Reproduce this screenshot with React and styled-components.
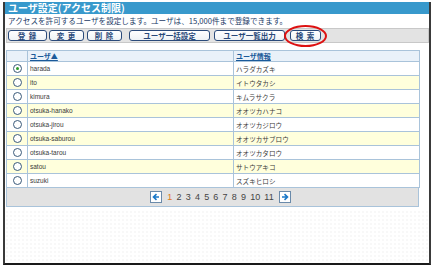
import React from "react";
import styled, { createGlobalStyle } from "styled-components";

const Global = createGlobalStyle`
  html, body { margin: 0; padding: 0; background: #fff; }
  body { font-family: "Noto Sans CJK JP", "Liberation Sans", sans-serif; }
`;

const Frame = styled.div`
  position: relative;
  margin: 2px 0 0 3px;
  width: 424px;
  height: 261px;
  border-left: 2px solid #3a3a3a;
  border-right: 2px solid #3a3a3a;
  border-bottom: 2px solid #1a1a1a;
  display: flex;
  flex-direction: column;
  background-color: #fff;
  background-image: radial-gradient(#efefef 0.6px, transparent 0.8px);
  background-size: 4px 4px;
`;

const TitleBar = styled.div`
  height: 12px;
  background: #3899cc;
  color: #fff;
  font-weight: bold;
  font-size: 10px;
  line-height: 12px;
  padding-left: 3px;
`;

const Desc = styled.div`
  background: #fff;
  color: #1a3a66;
  font-size: 7.6px;
  line-height: 14px;
  padding-left: 3px;
`;

const Body = styled.div`
  background: #fff;
  padding: 0 0 2px 1px;
  display: flex;
  flex-direction: column;
`;

const ButtonBar = styled.div`
  width: 420px;
  height: 13px;
  background: #e3e3e3;
  border: 1px solid #c8c8c8;
  display: flex;
  align-items: center;
  padding-left: 1px;
  box-sizing: content-box;
`;

const Btn = styled.button`
  width: ${(p) => p.$w}px;
  margin-left: ${(p) => p.$ml}px;
  height: 11px;
  padding: 0;
  border: 1px solid #2a4a7a;
  border-radius: 3px;
  background: linear-gradient(#ffffff, #eef2f6);
  color: #2a4a7a;
  font-family: "Noto Sans CJK JP", sans-serif;
  font-size: 7.5px;
  font-weight: bold;
  line-height: 9px;
  letter-spacing: ${(p) => p.$ls || 0}px;
  box-sizing: border-box;
  white-space: nowrap;
`;

const Ellipse = styled.div`
  position: absolute;
  left: 279px;
  top: 23px;
  width: 43px;
  height: 22px;
  border: 2px solid #dd1111;
  border-radius: 50%;
  box-sizing: border-box;
  pointer-events: none;
`;

const Table = styled.table`
  margin-top: 7px;
  width: 413px;
  border-collapse: collapse;
  table-layout: fixed;
  font-size: 7px;
  line-height: 12px;
`;

const HeadCell = styled.th`
  height: 10px;
  padding: 0 0 0 2px;
  background: #e9f1f9;
  border: 1px solid #a9c3da;
  color: #1a5a9a;
  font-size: 7px;
  font-weight: bold;
  text-align: left;
  text-decoration: underline;
  line-height: 9px;
`;

const Row = styled.tr`
  background: ${(p) => (p.$alt ? "#ffffdc" : "#ffffff")};
`;

const Cell = styled.td`
  height: 13px;
  padding: 0 0 0 2px;
  border: 1px solid #a9c3da;
  color: #3a3a3a;
  font-family: ${(p) => (p.$jp ? '"Noto Sans CJK JP", sans-serif' : '"Liberation Sans", sans-serif')};
  font-size: ${(p) => (p.$jp ? 6.6 : 6.5)}px;
  line-height: 12px;
  white-space: nowrap;
  overflow: hidden;
`;

const RadioCell = styled.td`
  height: 13px;
  padding: 0;
  border: 1px solid #a9c3da;
  text-align: center;
  vertical-align: middle;
  font-size: 0;
  line-height: 0;
`;

const Radio = styled.span`
  display: inline-block;
  width: 7px;
  height: 7px;
  border: 1px solid #3a5a7a;
  border-radius: 50%;
  background: #fff;
  &::after {
    content: "";
    display: ${(p) => (p.$on ? "block" : "none")};
    width: 3px;
    height: 3px;
    border-radius: 50%;
    background: #2a9a2a;
    margin: 2px;
  }
`;

const Pager = styled.div`
  width: 413px;
  height: 19px;
  box-sizing: border-box;
  background: #e2e2e2;
  border: 1px solid #a9c3da;
  border-top: none;
  display: flex;
  align-items: center;
  justify-content: center;
  padding-left: 16px;
  gap: 4.2px;
  font-family: "Liberation Sans", sans-serif;
  font-size: 9px;
  color: #444;
`;

const ArrowBox = styled.span`
  width: 10px;
  height: 10px;
  border: 1px solid #6a8aaa;
  background: #fff;
  display: inline-flex;
  align-items: center;
  justify-content: center;
  margin: 0 1px;
`;

const PageNum = styled.span`
  color: ${(p) => (p.$cur ? "#e07a1a" : "#444")};
`;

const Arrow = ({ dir }) => (
  <svg width="8" height="8" viewBox="0 0 8 8">
    {dir === "left" ? (
      <path d="M7 4H2M4.5 1.2L1.5 4l3 2.8" stroke="#1a78c8" strokeWidth="1.6" fill="none" />
    ) : (
      <path d="M1 4h5M3.5 1.2L6.5 4l-3 2.8" stroke="#1a78c8" strokeWidth="1.6" fill="none" />
    )}
  </svg>
);

const rows = [
  ["harada", "ハラダカズキ"],
  ["ito", "イトウタカシ"],
  ["kimura", "キムラサクラ"],
  ["otsuka-hanako", "オオツカハナコ"],
  ["otsuka-jirou", "オオツカジロウ"],
  ["otsuka-saburou", "オオツカサブロウ"],
  ["otsuka-tarou", "オオツカタロウ"],
  ["satou", "サトウアキコ"],
  ["suzuki", "スズキヒロシ"],
];

const buttons = [
  { label: "登 録", w: 39, ml: 0, ls: 1 },
  { label: "変 更", w: 35, ml: 2, ls: 1 },
  { label: "削 除", w: 35, ml: 3, ls: 1 },
  { label: "ユーザ一括設定", w: 81, ml: 7 },
  { label: "ユーザ一覧出力", w: 71, ml: 4 },
  { label: "検 索", w: 31, ml: 5, ls: 1 },
];

export default function App() {
  return (
    <>
      <Global />
      <Frame>
        <TitleBar>ユーザ設定(アクセス制限)</TitleBar>
        <Desc>アクセスを許可するユーザを設定します。ユーザは、15,000件まで登録できます。</Desc>
        <Body>
          <ButtonBar>
            {buttons.map((b) => (
              <Btn key={b.label} $w={b.w} $ml={b.ml} $ls={b.ls}>
                {b.label}
              </Btn>
            ))}
          </ButtonBar>
          <Table>
            <colgroup>
              <col style={{ width: 21 }} />
              <col style={{ width: 206 }} />
              <col style={{ width: 186 }} />
            </colgroup>
            <thead>
              <tr>
                <HeadCell />
                <HeadCell>ユーザ▲</HeadCell>
                <HeadCell>ユーザ情報</HeadCell>
              </tr>
            </thead>
            <tbody>
              {rows.map(([id, kana], i) => (
                <Row key={id} $alt={i % 2 === 1}>
                  <RadioCell>
                    <Radio $on={i === 0} />
                  </RadioCell>
                  <Cell>{id}</Cell>
                  <Cell $jp>{kana}</Cell>
                </Row>
              ))}
            </tbody>
          </Table>
          <Pager>
            <ArrowBox>
              <Arrow dir="left" />
            </ArrowBox>
            {Array.from({ length: 11 }, (_, i) => (
              <PageNum key={i} $cur={i === 0}>
                {i + 1}
              </PageNum>
            ))}
            <ArrowBox>
              <Arrow dir="right" />
            </ArrowBox>
          </Pager>
        </Body>
        <Ellipse />
      </Frame>
    </>
  );
}
